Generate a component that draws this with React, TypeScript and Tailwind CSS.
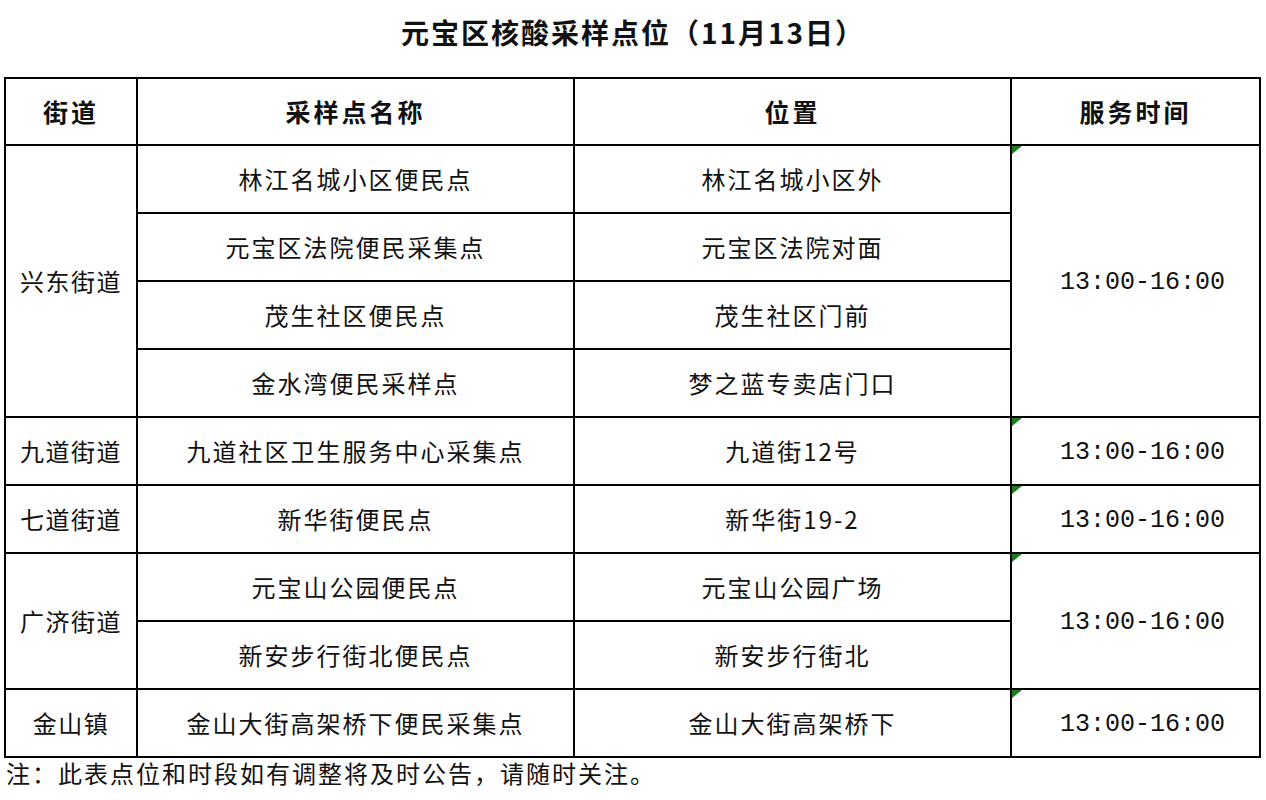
import React from "react";

const cjk = { fontFamily: '"Noto Sans CJK SC", "Noto Sans", sans-serif' };
const mono = { fontFamily: '"Liberation Mono", "DejaVu Sans Mono", monospace' };

type Row = { street?: string; span?: number; name: string; loc: string; time?: string; tspan?: number };

const rows: Row[] = [
  { street: "兴东街道", span: 4, name: "林江名城小区便民点", loc: "林江名城小区外", time: "13:00-16:00", tspan: 4 },
  { name: "元宝区法院便民采集点", loc: "元宝区法院对面" },
  { name: "茂生社区便民点", loc: "茂生社区门前" },
  { name: "金水湾便民采样点", loc: "梦之蓝专卖店门口" },
  { street: "九道街道", span: 1, name: "九道社区卫生服务中心采集点", loc: "九道街12号", time: "13:00-16:00", tspan: 1 },
  { street: "七道街道", span: 1, name: "新华街便民点", loc: "新华街19-2", time: "13:00-16:00", tspan: 1 },
  { street: "广济街道", span: 2, name: "元宝山公园便民点", loc: "元宝山公园广场", time: "13:00-16:00", tspan: 2 },
  { name: "新安步行街北便民点", loc: "新安步行街北" },
  { street: "金山镇", span: 1, name: "金山大街高架桥下便民采集点", loc: "金山大街高架桥下", time: "13:00-16:00", tspan: 1 },
];

function Corner() {
  return (
    <svg className="absolute left-0 top-0" width="10" height="8" viewBox="0 0 10 8">
      <polygon points="0,0 10,0 0,8" fill="#1f7a1f" />
    </svg>
  );
}

export default function App() {
  return (
    <div className="w-[1266px] h-[800px] bg-white text-[#111] overflow-hidden" style={cjk}>
      <div className="h-[77px] flex items-start justify-center pt-[13px]">
        <div className="text-[28px] font-bold tracking-[2px] leading-[38px]">元宝区核酸采样点位（11月13日）</div>
      </div>
      <table className="ml-[4px] w-[1255px] table-fixed border-collapse border-2 border-black">
        <colgroup>
          <col className="w-[132px]" />
          <col className="w-[437px]" />
          <col className="w-[437px]" />
          <col className="w-[249px]" />
        </colgroup>
        <thead>
          <tr className="h-[67px]">
            {["街道", "采样点名称", "位置", "服务时间"].map((h) => (
              <th key={h} className="border-2 border-black text-[25px] font-bold tracking-[3px] text-center align-middle">
                {h}
              </th>
            ))}
          </tr>
        </thead>
        <tbody>
          {rows.map((r, i) => (
            <tr key={i} className="h-[68px]">
              {r.street && (
                <td rowSpan={r.span} className="border-2 border-black text-[24px] tracking-[1.5px] text-center align-middle">
                  {r.street}
                </td>
              )}
              <td className="border-2 border-black text-[24px] tracking-[2px] text-center align-middle">{r.name}</td>
              <td className="border-2 border-black text-[24px] tracking-[2px] text-center align-middle">{r.loc}</td>
              {r.time && (
                <td rowSpan={r.tspan} className="relative border-2 border-black text-[25px] text-center align-middle pl-[14px] pt-[4px]" style={mono}>
                  <Corner />
                  {r.time}
                </td>
              )}
            </tr>
          ))}
        </tbody>
      </table>
      <div className="pl-[6px] text-[24px] tracking-[2px] leading-[30px]">注：此表点位和时段如有调整将及时公告，请随时关注。</div>
    </div>
  );
}
